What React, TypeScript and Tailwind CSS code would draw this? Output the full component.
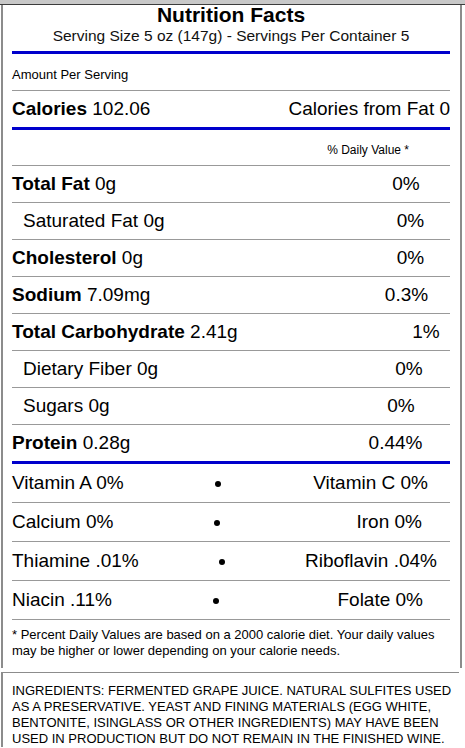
import React from "react";

const NUTRIENTS = [
  { name: "Total Fat", amt: "0g", pct: "0%", sub: false, box: "w-[88px]" },
  { name: "Saturated Fat", amt: "0g", pct: "0%", sub: true, box: "w-[79px]" },
  { name: "Cholesterol", amt: "0g", pct: "0%", sub: false, box: "w-[79px]" },
  { name: "Sodium", amt: "7.09mg", pct: "0.3%", sub: false, box: "w-[87px]" },
  { name: "Total Carbohydrate", amt: "2.41g", pct: "1%", sub: false, box: "w-[48px]" },
  { name: "Dietary Fiber", amt: "0g", pct: "0%", sub: true, box: "w-[82px]" },
  { name: "Sugars", amt: "0g", pct: "0%", sub: true, box: "w-[98px]" },
  { name: "Protein", amt: "0.28g", pct: "0.44%", sub: false, box: "w-[109px]" },
];

const VITAMINS = [
  { left: "Vitamin A 0%", right: "Vitamin C 0%", lw: "w-[203px]", pr: "pr-[22px]" },
  { left: "Calcium 0%", right: "Iron 0%", lw: "w-[202px]", pr: "pr-[28px]" },
  { left: "Thiamine .01%", right: "Riboflavin .04%", lw: "w-[207px]", pr: "pr-[13px]" },
  { left: "Niacin .11%", right: "Folate 0%", lw: "w-[201px]", pr: "pr-[27px]" },
];

export default function App() {
  return (
    <div className="w-[465px] h-[748px] overflow-hidden bg-white text-black font-['Liberation_Sans',Arial,sans-serif]">
      {/* window edge */}
      <div className="h-[5px] bg-[#c8c8c8] border-b border-[#3c3c3c]" />

      <div className="ml-[1px] w-[461px] border-x-2 border-[#8c8c8c] pl-[9px] pr-[10px] pb-[9px]">
        <h1 className="text-center text-[21px] leading-[19px] font-bold">Nutrition Facts</h1>
        <p className="text-center text-[15.5px] leading-[23px] text-[#111]">
          Serving Size 5 oz (147g) - Servings Per Container 5
        </p>
        <div className="mt-[4px] h-[3px] bg-[#0000cc]" />

        <div className="pt-[13px] pb-[7px] text-[13px] leading-[16px] border-b border-[#999]">
          Amount Per Serving
        </div>

        <div className="flex items-center justify-between h-[36px] text-[19px]">
          <span>
            <b>Calories</b> 102.06
          </span>
          <span>Calories from Fat 0</span>
        </div>
        <div className="h-[3px] bg-[#0000cc]" />

        <div className="flex justify-end pt-[12px] pb-[7px] pr-[41px] text-[12px] leading-[16px] border-b border-[#999]">
          % Daily Value *
        </div>

        {NUTRIENTS.map((n, i) => (
          <div
            key={n.name}
            className={
              i === NUTRIENTS.length - 1
                ? "flex items-center h-[39px] text-[19px] border-b-[3px] border-[#0000cc]"
                : "flex items-center h-[37px] text-[19px] border-b border-[#999]"
            }
          >
            <span className={n.sub ? "pl-[11px]" : ""}>
              {n.sub ? n.name : <b>{n.name}</b>} {n.amt}
            </span>
            <span className={"ml-auto flex-none text-center " + n.box}>{n.pct}</span>
          </div>
        ))}

        {VITAMINS.map((v) => (
          <div key={v.left} className="flex items-center h-[39px] text-[19px] border-b border-[#999]">
            <span className={"flex-none " + v.lw}>{v.left}</span>
            <span className="w-[6px] h-[6px] mt-[2px] flex-none rounded-full bg-black" />
            <span className={"flex-1 text-right " + v.pr}>{v.right}</span>
          </div>
        ))}

        <p className="pt-[7px] text-[13px] leading-[16px]">
          * Percent Daily Values are based on a 2000 calorie diet. Your daily values
          <br />
          may be higher or lower depending on your calorie needs.
        </p>
      </div>

      <div className="mt-[4px] ml-[1px] w-[458px] border-t border-l-2 border-[#8c8c8c] pl-[9px] pt-[10px] text-[13px] leading-[16px]">
        INGREDIENTS: FERMENTED GRAPE JUICE. NATURAL SULFITES USED
        <br />
        AS A PRESERVATIVE. YEAST AND FINING MATERIALS (EGG WHITE,
        <br />
        BENTONITE, ISINGLASS OR OTHER INGREDIENTS) MAY HAVE BEEN
        <br />
        USED IN PRODUCTION BUT DO NOT REMAIN IN THE FINISHED WINE.
      </div>
    </div>
  );
}
